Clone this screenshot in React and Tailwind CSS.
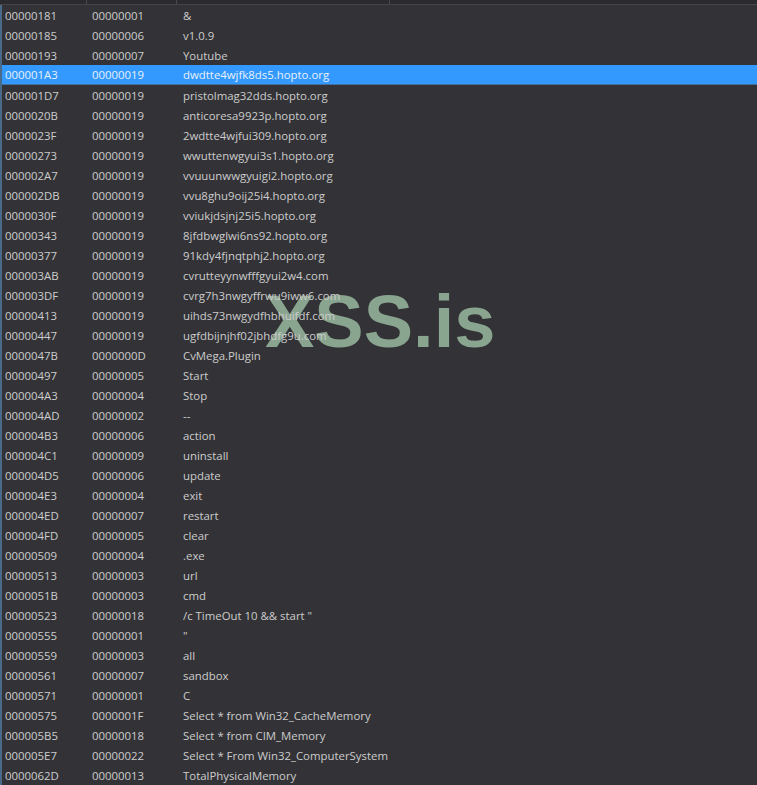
const ROWS = [
  ['00000181', '00000001', '&'],
  ['00000185', '00000006', 'v1.0.9'],
  ['00000193', '00000007', 'Youtube'],
  ['000001A3', '00000019', 'dwdtte4wjfk8ds5.hopto.org'],
  ['000001D7', '00000019', 'pristolmag32dds.hopto.org'],
  ['0000020B', '00000019', 'anticoresa9923p.hopto.org'],
  ['0000023F', '00000019', '2wdtte4wjfui309.hopto.org'],
  ['00000273', '00000019', 'wwuttenwgyui3s1.hopto.org'],
  ['000002A7', '00000019', 'vvuuunwwgyuigi2.hopto.org'],
  ['000002DB', '00000019', 'vvu8ghu9oij25i4.hopto.org'],
  ['0000030F', '00000019', 'vviukjdsjnj25i5.hopto.org'],
  ['00000343', '00000019', '8jfdbwglwi6ns92.hopto.org'],
  ['00000377', '00000019', '91kdy4fjnqtphj2.hopto.org'],
  ['000003AB', '00000019', 'cvrutteyynwfffgyui2w4.com'],
  ['000003DF', '00000019', 'cvrg7h3nwgyffrwu9iww6.com'],
  ['00000413', '00000019', 'uihds73nwgydfhbhuifdf.com'],
  ['00000447', '00000019', 'ugfdbijnjhf02jbhdfg9u.com'],
  ['0000047B', '0000000D', 'CvMega.Plugin'],
  ['00000497', '00000005', 'Start'],
  ['000004A3', '00000004', 'Stop'],
  ['000004AD', '00000002', '--'],
  ['000004B3', '00000006', 'action'],
  ['000004C1', '00000009', 'uninstall'],
  ['000004D5', '00000006', 'update'],
  ['000004E3', '00000004', 'exit'],
  ['000004ED', '00000007', 'restart'],
  ['000004FD', '00000005', 'clear'],
  ['00000509', '00000004', '.exe'],
  ['00000513', '00000003', 'url'],
  ['0000051B', '00000003', 'cmd'],
  ['00000523', '00000018', '/c TimeOut 10 && start "'],
  ['00000555', '00000001', '"'],
  ['00000559', '00000003', 'all'],
  ['00000561', '00000007', 'sandbox'],
  ['00000571', '00000001', 'C'],
  ['00000575', '0000001F', 'Select * from Win32_CacheMemory'],
  ['000005B5', '00000018', 'Select * from CIM_Memory'],
  ['000005E7', '00000022', 'Select * From Win32_ComputerSystem'],
  ['0000062D', '00000013', 'TotalPhysicalMemory'],
]

export default function App() {
  return (
    <div className="relative h-[785px] w-[757px] overflow-hidden bg-[#333337] font-['Open_Sans',sans-serif] text-[11.4px] text-[#cccccc]">
      {/* Column header strip */}
      <div className="flex h-[5px] border-b border-[#45454a] bg-[#2b2b2d]">
        <div className="w-[87px] border-r border-[#4a4a4e]" />
        <div className="w-[90px] border-r border-[#4a4a4e]" />
        <div className="w-[213px] border-r border-[#4a4a4e]" />
      </div>

      {/* Watermark sits under the table text */}
      <div className="absolute left-[265px] top-[285px] font-['Liberation_Sans',sans-serif] text-[74px] leading-none font-bold text-[#8aa58f]">
        XSS.is
      </div>

      {/* String table */}
      <div className="relative border-l-2 border-[#4a6a8a]">
        {ROWS.map((row, i) => (
          <div
            key={row[0]}
            className={i === 3
              ? 'flex h-[20px] items-center border-b border-[#44709e] bg-[#3399ff] pt-[1px] text-[#e8f0f8]'
              : 'flex h-[20px] items-center pt-[1px]'}>
            <span className="w-[90px] pl-[3px]">{row[0]}</span>
            <span className="w-[91px]">{row[1]}</span>
            <span className="whitespace-pre">{row[2]}</span>
          </div>
        ))}
      </div>
    </div>
  )
}
